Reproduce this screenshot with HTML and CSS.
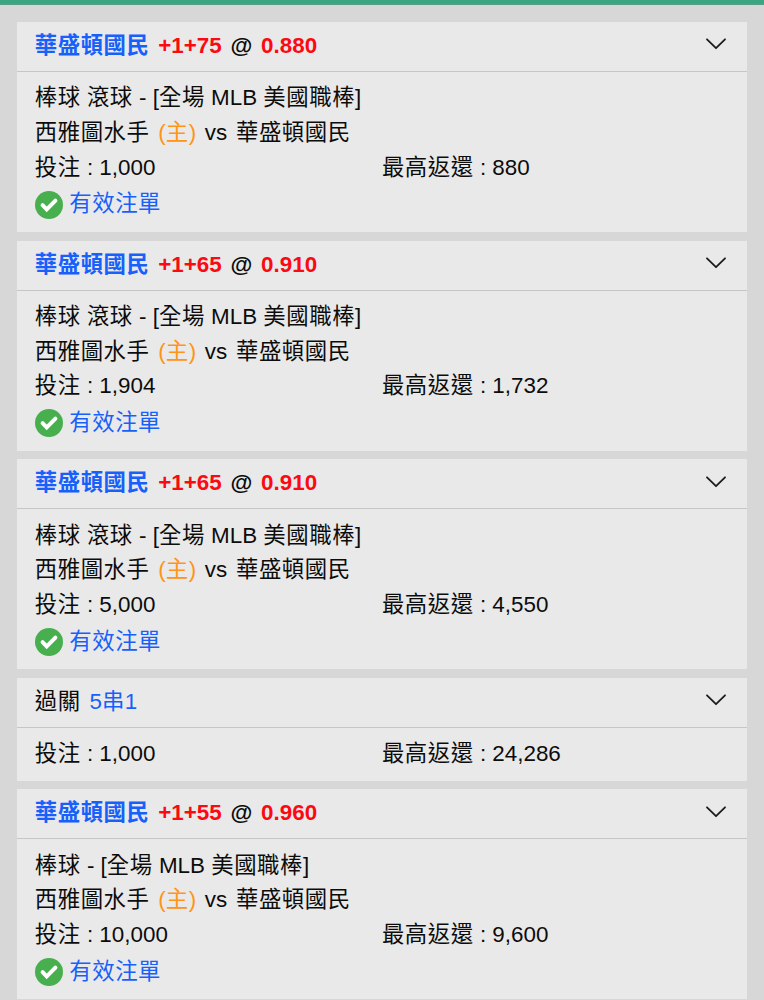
FILE: index.html
```html
<!DOCTYPE html>
<html lang="zh-Hant">

<head>
  <title>注單</title>
  <meta charset="UTF-8" />
  <link rel="stylesheet" href="styles.css">
</head>

<body>

  <!-- shared icons -->
  <svg class="defs">
    <symbol id="chevron" viewBox="0 0 20 12">
      <path d="M1 1.3l9 8.9 9-8.9" fill="none" stroke="#1c1c1c" stroke-width="1.8" stroke-linecap="round" stroke-linejoin="round" />
    </symbol>
    <symbol id="check" viewBox="0 0 28 28">
      <circle cx="14" cy="14" r="14" fill="#48af4f" />
      <path d="M7.6 14.2l4.1 4.1 8.7-8.7" fill="none" stroke="#fff" stroke-width="4" stroke-linecap="round" />
    </symbol>
  </svg>

  <div class="topbar"></div>

  <main class="bets">

    <section class="bet">
      <header class="bet-head">
        <div class="pick"><b class="team zh">華盛頓國民</b> <b class="odds">+1+75</b> <b>@</b> <b class="odds">0.880</b></div>
        <svg class="chevron"><use href="#chevron" /></svg>
      </header>
      <div class="bet-body">
        <p><span class="zh">棒球</span> <span class="zh">滾球</span> - [<span class="zh">全場</span> MLB <span class="zh">美國職棒</span>]</p>
        <p class="teams"><span class="zh">西雅圖水手</span> <span class="home">(<span class="zh">主</span>)</span> vs <span class="zh">華盛頓國民</span></p>
        <div class="amounts">
          <p><span class="zh">投注</span> : 1,000</p>
          <p><span class="zh">最高返還</span> : 880</p>
        </div>
        <div class="status"><svg><use href="#check" /></svg><span class="zh">有效注單</span></div>
      </div>
    </section>

    <section class="bet">
      <header class="bet-head">
        <div class="pick"><b class="team zh">華盛頓國民</b> <b class="odds">+1+65</b> <b>@</b> <b class="odds">0.910</b></div>
        <svg class="chevron"><use href="#chevron" /></svg>
      </header>
      <div class="bet-body">
        <p><span class="zh">棒球</span> <span class="zh">滾球</span> - [<span class="zh">全場</span> MLB <span class="zh">美國職棒</span>]</p>
        <p class="teams"><span class="zh">西雅圖水手</span> <span class="home">(<span class="zh">主</span>)</span> vs <span class="zh">華盛頓國民</span></p>
        <div class="amounts">
          <p><span class="zh">投注</span> : 1,904</p>
          <p><span class="zh">最高返還</span> : 1,732</p>
        </div>
        <div class="status"><svg><use href="#check" /></svg><span class="zh">有效注單</span></div>
      </div>
    </section>

    <section class="bet">
      <header class="bet-head">
        <div class="pick"><b class="team zh">華盛頓國民</b> <b class="odds">+1+65</b> <b>@</b> <b class="odds">0.910</b></div>
        <svg class="chevron"><use href="#chevron" /></svg>
      </header>
      <div class="bet-body">
        <p><span class="zh">棒球</span> <span class="zh">滾球</span> - [<span class="zh">全場</span> MLB <span class="zh">美國職棒</span>]</p>
        <p class="teams"><span class="zh">西雅圖水手</span> <span class="home">(<span class="zh">主</span>)</span> vs <span class="zh">華盛頓國民</span></p>
        <div class="amounts">
          <p><span class="zh">投注</span> : 5,000</p>
          <p><span class="zh">最高返還</span> : 4,550</p>
        </div>
        <div class="status"><svg><use href="#check" /></svg><span class="zh">有效注單</span></div>
      </div>
    </section>

    <!-- parlay, no match details -->
    <section class="bet">
      <header class="bet-head">
        <div class="pick"><span class="zh">過關</span> <span class="team">5<span class="zh">串</span>1</span></div>
        <svg class="chevron"><use href="#chevron" /></svg>
      </header>
      <div class="bet-body short">
        <div class="amounts">
          <p><span class="zh">投注</span> : 1,000</p>
          <p><span class="zh">最高返還</span> : 24,286</p>
        </div>
      </div>
    </section>

    <section class="bet">
      <header class="bet-head">
        <div class="pick"><b class="team zh">華盛頓國民</b> <b class="odds">+1+55</b> <b>@</b> <b class="odds">0.960</b></div>
        <svg class="chevron"><use href="#chevron" /></svg>
      </header>
      <div class="bet-body">
        <p><span class="zh">棒球</span> - [<span class="zh">全場</span> MLB <span class="zh">美國職棒</span>]</p>
        <p class="teams"><span class="zh">西雅圖水手</span> <span class="home">(<span class="zh">主</span>)</span> vs <span class="zh">華盛頓國民</span></p>
        <div class="amounts">
          <p><span class="zh">投注</span> : 10,000</p>
          <p><span class="zh">最高返還</span> : 9,600</p>
        </div>
        <div class="status"><svg><use href="#check" /></svg><span class="zh">有效注單</span></div>
      </div>
    </section>

  </main>

</body>

</html>
```

FILE: styles.css
```css
* {
  box-sizing: border-box;
}

body {
  margin: 0;
  height: 1000px;
  overflow: hidden;
  background-color: #d7d7d7;
  color: #0c0c0c;
  font-family: "Liberation Sans", "Noto Sans CJK TC", sans-serif;
  font-size: 22.4px;
  line-height: 34.7px;
}

p {
  margin: 0;
}

.defs {
  display: none;
}

.topbar {
  height: 5px;
  background-color: #3ba581;
  border-bottom: 1px solid #5b9c84;
}

.bets {
  display: flex;
  flex-direction: column;
  gap: 8.7px;
  padding: 17px 17.3px 0;
}

.bet {
  background-color: #e9e9e9;
}

.bet-head {
  display: flex;
  justify-content: space-between;
  height: 50px;
  padding: 7px 20.5px 0 17.5px;
  border-bottom: 1px solid #c6c6c6;
}

.bet-body {
  height: 160px;
  padding: 9.3px 17.7px 0 17.5px;
}

.bet-body.short {
  height: 52.7px;
}

.zh {
  letter-spacing: .55px;
}

.pick,
.teams {
  word-spacing: 2.5px;
}

.team,
.status {
  color: #1760fa;
}

.odds {
  color: #fb0a12;
}

.home {
  color: #ff9417;
}

.chevron {
  width: 20px;
  height: 12px;
  margin-top: 9.2px;
}

.amounts {
  display: grid;
  grid-template-columns: 1fr 1fr;
}

.status {
  display: flex;
  align-items: center;
  gap: 6.5px;
  margin-top: 2px;
}

.status svg {
  width: 28px;
  height: 28px;
}
```
